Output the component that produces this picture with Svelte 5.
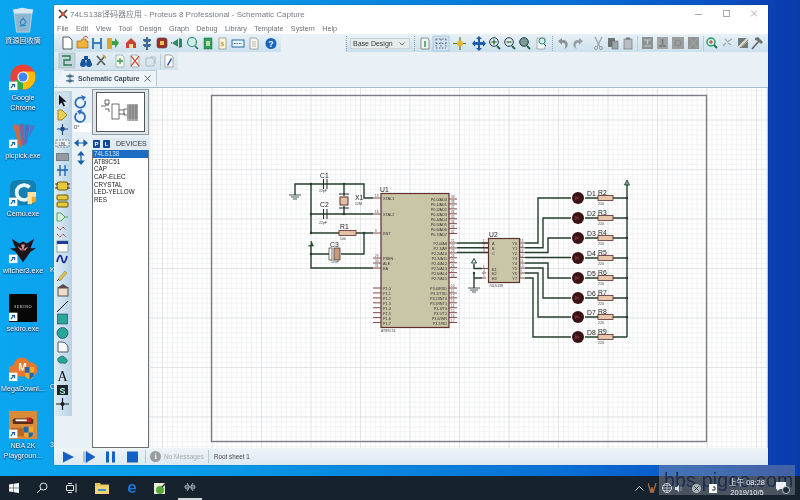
<script>
  const menu = ['File','Edit','View','Tool','Design','Graph','Debug','Library','Template','System','Help'];
  const devices = ['AT89C51','CAP','CAP-ELEC','CRYSTAL','LED-YELLOW','RES'];
  const desk = [
    { k:'bin', l:'資源回收筒' }, { k:'chrome', l:'Google Chrome' }, { k:'pick', l:'picpick.exe' },
    { k:'cemu', l:'Cemu.exe' }, { k:'witcher', l:'witcher3.exe' }, { k:'sekiro', l:'sekiro.exe' },
    { k:'mega', l:'MegaDownl...' }, { k:'nba', l:'NBA 2K Playgroun...' }
  ];
  const p0 = ['P0.0/AD0','P0.1/AD1','P0.2/AD2','P0.3/AD3','P0.4/AD4','P0.5/AD5','P0.6/AD6','P0.7/AD7'];
  const p2 = ['P2.0/A8','P2.1/A9','P2.2/A10','P2.3/A11','P2.4/A12','P2.5/A13','P2.6/A14','P2.7/A15'];
  const p3 = ['P3.0/RXD','P3.1/TXD','P3.2/INT0','P3.3/INT1','P3.4/T0','P3.5/T1','P3.6/WR','P3.7/RD'];
  const rowsY = (s) => Array.from({length:8},(_,i)=>s+i*4.93);
  const leds = [198,218,238,258,278,298,317,337];
  const y2l = [243,247.7,252.5,257.5,263,268,273,278];
  const y2r = [537,542,547,0,547,542,537,532];
  const leftP1 = rowsY(288);
</script>

<div class="screen">
  <div class="desktop">
    <div class="icons">
      {#each desk as d}
        <div class="dicon">
          <svg width="28" height="28" viewBox="0 0 30 30">
            {#if d.k==='bin'}
              <path d="M5 4h20l-3 24H8z" fill="#8fb6cf" stroke="#cfe4f0" stroke-width=".7"/>
              <path d="M4 4l10-2 12 2-1 4H6z" fill="#d8e8f2"/>
              <path d="M12 17l3-4 3 4-2 3h-3zM11 21h7" fill="none" stroke="#2f8fc8" stroke-width="1.4"/>
            {:else if d.k==='chrome'}
              <circle cx="15" cy="15" r="13.5" fill="#ea4335"/>
              <path d="M15 15L3.5 22A13.5 13.5 0 0 0 15 28.500z" fill="#34a853"/>
              <path d="M15 15L15 28.500A13.500 13.500 0 0 0 27 9H15z" fill="#fbbc05"/>
              <path d="M3 21l7-4 5 11a13 13 0 0 1-12-7z" fill="#34a853"/>
              <circle cx="15" cy="15" r="6" fill="#fff"/><circle cx="15" cy="15" r="4.800" fill="#4285f4"/>
            {:else if d.k==='pick'}
              <path d="M4 4l6 0 4 24-3 0z" fill="#c96a4a"/><path d="M11 3l5 0 1 23-3 0z" fill="#8f5f8f"/><path d="M17 4l5 0-3 20-2 0z" fill="#556ab8"/><path d="M23 4l5 1-7 14z" fill="#4a79c8"/>
            {:else if d.k==='cemu'}
              <rect x="1" y="1" width="28" height="27" rx="7" fill="#157fb0"/>
              <path d="M22 9a8 8 0 1 0 0 11" fill="none" stroke="#e8f7fb" stroke-width="4"/>
              <path d="M20 14h9v9a6 6 0 0 1-9 2z" fill="#f0a92b"/><path d="M20 14h4.500v13H20zM24 14h5v5h-5z" fill="#f8e4a8"/>
            {:else if d.k==='witcher'}
              <path d="M15 28L7 17 1 13l6 0L3 3l8 5 4-2 4 2 8-5-4 10 6 0-6 4z" fill="#1b1418"/>
              <path d="M9 11l5 3-1 2zM21 11l-5 3 1 2zM13 9h4l-2 8z" fill="#d98fa0"/>
            {:else if d.k==='sekiro'}
              <rect x="0" y="0" width="30" height="30" fill="#070707"/>
              <text x="15" y="15" class="sek" text-anchor="middle">SEKIRO</text>
            {:else if d.k==='mega'}
              <path d="M5 24a6 6 0 0 1 0-12 9 9 0 0 1 17-3 7 7 0 0 1 2 15z" fill="#e8782a"/>
              <text x="10" y="18" class="megat">M</text>
              <path d="M17 14h10v7a6 6 0 0 1-5 6 6 6 0 0 1-5-6z" fill="#f1a92c"/><path d="M17 14h5v6h-5zM22 20h5l-1 4-4 3z" fill="#1f66b0"/>
            {:else}
              <rect x="0" y="0" width="30" height="30" fill="#d98b3a"/>
              <rect x="4" y="8" width="22" height="6" rx="2" fill="#5a2c18"/><rect x="7" y="9" width="16" height="2" fill="#fff"/>
              <rect x="19" y="7" width="5" height="5" fill="#c4252a"/>
              <path d="M2 18h14v9H2z" fill="#b76524"/>
              <path d="M16 17h10v6a6 6 0 0 1-5 6 6 6 0 0 1-5-6z" fill="#f1a92c"/><path d="M16 17h5v6h-5zM21 23h5l-1 4-4 2z" fill="#1f66b0"/>
            {/if}
            {#if d.k!=='bin'}
              <rect x="0" y="20" width="9" height="9" fill="#fff"/><path d="M2 27l3-4M3 23h3v3" stroke="#1659a8" stroke-width="1.200" fill="none"/>
            {/if}
          </svg>
          <span class="dlabel">{d.l}</span>
        </div>
      {/each}
    </div>
    <span class="peek p1">K</span><span class="peek p2">C</span><span class="peek p3">3</span>

    <div class="window">
      <div class="titlebar">
        <svg width="10" height="10" viewBox="0 0 10 10"><path d="M1 1l8 8M9 1L1 9" stroke="#333" stroke-width="1.600"/><circle cx="5" cy="5" r="2.200" fill="#c85a3c"/></svg>
        <span class="title">74LS138译码器应用 - Proteus 8 Professional - Schematic Capture</span>
        <span class="spacer"></span>
        <svg class="caps" width="76" height="10" viewBox="0 0 76 10"><path d="M14 5.500h7" stroke="#aaa"/><rect x="42.500" y="1.500" width="6" height="6" fill="none" stroke="#aaa"/><path d="M70 1.500l6 6M76 1.500l-6 6" stroke="#aaa"/></svg>
      </div>
      <div class="menubar">{#each menu as m}<span>{m}</span>{/each}</div>

      <div class="tool1">
        <svg class="tb" width="714" height="18" viewBox="54 34 714 18">
          <path d="M63 37h6l3 3v9h-9z" fill="#fff" stroke="#333" stroke-width=".8"/>
          <path d="M77 41h4l1-2h4v2h2v7H77z" fill="#eeb13a" stroke="#8a5c10" stroke-width=".6"/><path d="M83 38l3-2 2 2" stroke="#d44" fill="none"/>
          <rect x="92" y="38" width="10" height="11" fill="#3a7db8"/><rect x="94" y="38" width="6" height="4" fill="#e8eef2"/><rect x="94" y="44" width="6" height="5" fill="#cfe0ec"/>
          <rect x="107" y="38" width="5" height="11" fill="#d8a738"/><path d="M112 41h3v-3l4 5-4 5v-3h-3z" fill="#3aa24a"/>
          <path d="M126 43l5-5 5 5v5h-10z" fill="#c9432f"/><rect x="129" y="44" width="4" height="4" fill="#f2d9a0"/>
          <path d="M143 40h8M143 45h8M147 37v13" stroke="#2c4d6a" stroke-width="1.600"/><rect x="144" y="39" width="6" height="3" fill="#3d6d94"/><rect x="144" y="44" width="6" height="3" fill="#3d6d94"/>
          <rect x="157" y="38" width="10" height="10" rx="2" fill="#9c2d2d" stroke="#444" stroke-width=".6"/><rect x="160" y="41" width="4" height="4" fill="#e9c25a"/>
          <path d="M172 43l6-4v8zM179 38l3 1v8l-3 1z" fill="#2f8a5e"/><path d="M172 43h-1" stroke="#222"/>
          <circle cx="192" cy="42" r="4.500" fill="#cdeee6" stroke="#2d8a7a" stroke-width="1.200"/><path d="M195 46l3 3" stroke="#2d6a5a" stroke-width="1.500"/>
          <rect x="204" y="38" width="8" height="11" fill="#2f9e60" stroke="#1f6a40" stroke-width=".5"/><rect x="206" y="41" width="4" height="5" fill="#b8e0a0"/>
          <path d="M219 38h7v11h-7z" fill="#fff6d8" stroke="#777" stroke-width=".6"/><text x="220.500" y="46" class="ti" fill="#a8801a">$</text>
          <rect x="232" y="40" width="12" height="7" fill="#eef5fa" stroke="#2b6ca5"/><path d="M234 43.500h8" stroke="#2b6ca5" stroke-dasharray="1.500 1"/>
          <path d="M250 38h6l2 2v9h-8z" fill="#f4f4f0" stroke="#888" stroke-width=".7"/><path d="M252 42h4M252 44h4M252 46h4" stroke="#999" stroke-width=".6"/>
          <circle cx="271" cy="43.500" r="5.500" fill="#1565c0"/><text x="271" y="46.500" class="q" text-anchor="middle">?</text>
          <path d="M346.500 36v15M414.500 36v15" stroke="#8ea6b4" stroke-dasharray="1 1"/>
          <path d="M421 38h7l1 2v9h-8z" fill="#f3f5f2" stroke="#666" stroke-width=".7"/><path d="M425 41v6" stroke="#2f8a4e" stroke-width="1.400"/>
          <rect x="433" y="36" width="16" height="15" fill="#cfe3f2" stroke="#94b6ce" stroke-width=".6"/><path d="M436 39h10M436 43.500h10M436 48h10M436 39v9M441 39v9M446 39v9" stroke="#445" stroke-width=".8" stroke-dasharray="1.500 1.500"/>
          <path d="M453 43.500h13M460 37v13" stroke="#5f7a18" stroke-width="1.200"/><circle cx="460" cy="43.500" r="3" fill="#e0b836"/>
          <path d="M479 36l3 3h-2v3h3v-2l3 3.500-3 3.500v-2h-3v3h2l-3 3-3-3h2v-3h-3v2l-3-3.500 3-3.500v2h3v-3h-2z" fill="#1b5fa8"/>
          <circle cx="494" cy="42" r="4.300" fill="#dceee8" stroke="#235" stroke-width="1"/><path d="M497 46l3 3" stroke="#264" stroke-width="1.800"/><path d="M491.500 42h5M494 39.500v5" stroke="#185a28" stroke-width="1.100"/>
          <circle cx="509" cy="42" r="4.300" fill="#dceee8" stroke="#235" stroke-width="1"/><path d="M512 46l3 3" stroke="#264" stroke-width="1.800"/><path d="M506.500 42h5" stroke="#185a28" stroke-width="1.100"/>
          <circle cx="524" cy="42" r="4.300" fill="#7c9c94" stroke="#235" stroke-width="1"/><path d="M527 46l3 3" stroke="#264" stroke-width="1.800"/>
          <path d="M537 38h8v11h-8z" fill="#f4f6f4" stroke="#888" stroke-width=".6"/><circle cx="542" cy="41" r="3" fill="#d8f0e8" stroke="#2d8a7a" stroke-width="1"/><path d="M544 44l2 2" stroke="#2d6a5a"/>
          <path d="M552.500 36v15" stroke="#8ea6b4" stroke-dasharray="1 1"/>
          <path d="M558 41l4-3v2h2a4.500 4.500 0 0 1 2 8l-2 1a4 4 0 0 0 0-6h-2v2z" fill="#8a9296"/>
          <path d="M583 41l-4-3v2h-2a4.500 4.500 0 0 0-2 8l2 1a4 4 0 0 1 0-6h2v2z" fill="#9aa2a6"/>
          <path d="M595 37l5 10M602 37l-5 10" stroke="#9aa0a4" stroke-width="1.200"/><circle cx="596" cy="48" r="1.500" fill="none" stroke="#9aa0a4"/><circle cx="601" cy="48" r="1.500" fill="none" stroke="#9aa0a4"/>
          <rect x="608" y="38" width="7" height="9" fill="#6c7478"/><rect x="612" y="41" width="6" height="8" fill="#9da5a9" stroke="#555" stroke-width=".5"/>
          <rect x="624" y="39" width="8" height="10" fill="#b9bfc2" stroke="#777" stroke-width=".7"/><rect x="626" y="37.500" width="4" height="2" fill="#777"/>
          <path d="M637.500 36v15" stroke="#a6bac6" stroke-width=".6"/>
          <rect x="642" y="37" width="11" height="12" fill="#8e9294"/><path d="M644 40h7M647.500 40v4M644 46h7" stroke="#c9cccd" stroke-width="1.200"/>
          <rect x="657" y="37" width="11" height="12" fill="#a0a4a6"/><path d="M662.500 39v6M659 46h7" stroke="#737779" stroke-width="1.500"/>
          <rect x="672" y="37" width="12" height="12" fill="#9a9e9f"/><circle cx="678" cy="43" r="3" fill="none" stroke="#86898a"/>
          <rect x="688" y="37" width="11" height="12" fill="#909495"/><path d="M689 38l9 10M698 38l-9 10" stroke="#a5a8a9"/>
          <path d="M703.500 36v15" stroke="#a6bac6" stroke-width=".6"/>
          <circle cx="711" cy="42" r="4" fill="#d5eee0" stroke="#239a6a" stroke-width="1.400"/><path d="M714 45l3 3" stroke="#1b6a4a" stroke-width="1.800"/><path d="M709 42h4M711 40v4" stroke="#b33"/>
          <path d="M723 46l3-3M727 42l5-3M725 39l2 2M731 45l-3-2" stroke="#9da3a6" stroke-width="1.100"/>
          <rect x="738" y="38" width="10" height="10" fill="#73787a"/><path d="M738 48l10-10" stroke="#dde0d6" stroke-width="2"/><path d="M741 47l7-6" stroke="#c6bf80"/>
          <path d="M752 49l7-8" stroke="#666" stroke-width="1.600"/><path d="M755 38l3-1 5 5-2 2-3-3-3-1z" fill="#6e7376"/>
        </svg>
        <div class="select">Base Design<svg width="6" height="4" viewBox="0 0 6 4"><path d="M.5.5L3 3 5.500.5" stroke="#666" fill="none"/></svg></div>
      </div>

      <div class="tool2">
        <svg width="124" height="18" viewBox="54 52 124 18">
          <rect x="59" y="53" width="16" height="15" fill="#c2d5dd" stroke="#9fb6c2" stroke-width=".6"/>
          <path d="M62 56h8v4h-6v5h8" fill="none" stroke="#2d7a52" stroke-width="1.300"/>
          <path d="M80 64a3 3 0 0 0 6 0l-1-5h-3zM86 64a3 3 0 0 0 6 0l-2-5h-3z" fill="#14559e"/><rect x="84" y="56" width="4" height="4" fill="#14559e"/>
          <path d="M97 65l8-9M97 56l8 9" stroke="#59605f" stroke-width="1.700"/><path d="M103 55l3 3" stroke="#c9a13a" stroke-width="1.500"/>
          <path d="M116 55h6l2 2v10h-8z" fill="#f2f6ea" stroke="#8aa" stroke-width=".7"/><path d="M120 58v6M117 61h6" stroke="#3c9a4a" stroke-width="1.300"/>
          <path d="M131 55h6l2 2v10h-8z" fill="#f5efe6" stroke="#999" stroke-width=".7"/><path d="M131 56l8 10M139 56l-8 10" stroke="#c0392b" stroke-width="1.200"/>
          <path d="M146 58h6l2 2v6h-8zM150 57h5v7" fill="none" stroke="#aeb6ba" stroke-width=".9"/>
          <path d="M160.500 54v15" stroke="#a6bac6" stroke-width=".6"/>
          <path d="M165 55h6l2 2v10h-8z" fill="#fbfbf8" stroke="#8a8a8a" stroke-width=".7"/><path d="M167 65l4-7 1 1-4 7z" fill="#1a4f9c"/>
        </svg>
      </div>

      <div class="tabs">
        <div class="tab">
          <svg width="8" height="11" viewBox="0 0 10 12"><path d="M0 3h10M0 9h10M5 0v12" stroke="#2c4d6a" stroke-width="1.100"/><rect x="2" y="2" width="6" height="2.500" fill="#3d6d94"/><rect x="2" y="7.500" width="6" height="2.500" fill="#3d6d94"/></svg>
          <b>Schematic Capture</b>
          <svg class="x" width="7" height="7" viewBox="0 0 7 7"><path d="M.5.5l6 6M6.500.5l-6 6" stroke="#444" stroke-width=".8"/></svg>
        </div>
      </div>

      <div class="main">
        <div class="toolbox">
          <svg width="17" height="325" viewBox="55 91 17 325">
            <rect x="55.500" y="92" width="14" height="16" fill="#cfdfea" stroke="#b6ccd8" stroke-width=".5"/>
            <path d="M59 95v10l2.500-2.500 2 4 1.500-.7-2-4h3.500z" fill="#111"/>
            <path d="M58 110h4l5 5-5 5h-4z" fill="#e9cf5a" stroke="#a08620"/>
            <path d="M57 129h11M62.500 124v11" stroke="#1a4f8c" stroke-width="1.200"/><circle cx="62.500" cy="129" r="2.300" fill="#1a4f8c"/>
            <rect x="56" y="140" width="13" height="7" fill="#eef4f8" stroke="#5b6d78" stroke-dasharray="2 1" stroke-width=".8"/><text x="62.500" y="145.500" class="lb" text-anchor="middle" fill="#334">LBL</text>
            <rect x="56" y="153" width="13" height="8" fill="#777e82"/><path d="M57 155h11M57 157h11M57 159h11" stroke="#dde" stroke-width=".6"/>
            <path d="M57 170h11M60 165v11M65 165v11" stroke="#1b5fa8" stroke-width="1.300"/>
            <rect x="57" y="182" width="11" height="8" rx="2" fill="#e6c83a" stroke="#6a5a10"/><path d="M55 184h3M55 188h3M67 184h3M67 188h3" stroke="#333"/>
            <rect x="57" y="195" width="11" height="5" rx="1" fill="#e6c83a" stroke="#6a5a10"/><rect x="57" y="202" width="11" height="5" rx="1" fill="#e6c83a" stroke="#6a5a10"/>
            <path d="M57 213h4l4 4-4 4h-4zM65 217h3" fill="#d8eedc" stroke="#58a06a"/>
            <path d="M57 227l3 3 3-3 3 3M57 234l3 3 3-3 3 3" fill="none" stroke="#a33" stroke-width="1" stroke-dasharray="1.500 .6"/>
            <rect x="57" y="241" width="11" height="11" fill="#fdfdfd" stroke="#8aa"/><rect x="57" y="241" width="11" height="3" fill="#1f3c9c"/>
            <path d="M57 262c2-8 4-8 5-3s3 5 5-3" fill="none" stroke="#1d2a9c" stroke-width="1.700"/>
            <path d="M58 279l7-8 2 2-7 8z" fill="#e0c04a" stroke="#777" stroke-width=".5"/><path d="M57 281l2-2" stroke="#444"/>
            <rect x="58" y="288" width="10" height="8" fill="#f0ddc8" stroke="#555"/><path d="M57 288l6-4 6 4" fill="#5d4b4b"/>
            <path d="M57 312l11-11" stroke="#111" stroke-width="1"/>
            <rect x="57.500" y="314" width="10" height="10" fill="#27a896" stroke="#223377" stroke-width=".6"/>
            <circle cx="62.500" cy="333" r="5.500" fill="#27a896" stroke="#135"  stroke-width=".6"/>
            <path d="M58 342h4a6 6 0 0 1 6 6v4H58z" fill="#f4f8fa" stroke="#556"/>
            <path d="M60 357a3 3 0 0 1 5 1 3 3 0 0 1 2 4 3 3 0 0 1-4 1 4 4 0 0 1-5-2 3 3 0 0 1 2-4z" fill="#27a896" stroke="#135" stroke-width=".5"/>
            <text x="62.500" y="381" class="bigA" text-anchor="middle">A</text>
            <rect x="57" y="385" width="11" height="10" fill="#223"/><text x="62.500" y="393.500" class="sS" text-anchor="middle">S</text>
            <path d="M56 404h13M62.500 398v12" stroke="#1c1c1c" stroke-width="1.200"/><circle cx="62.500" cy="404" r="2" fill="#1c1c1c"/>
          </svg>
        </div>
        <div class="orient">
          <svg width="18" height="80" viewBox="0 0 18 80">
            <path d="M13 8a5 5 0 1 1-3-3" fill="none" stroke="#2a6dba" stroke-width="1.800"/><path d="M9 2l5 2-3 4z" fill="#2a6dba"/>
            <path d="M5 20a5 5 0 1 0 3-1" fill="none" stroke="#2a6dba" stroke-width="1.800"/><path d="M10 16l-5 2 3 4z" fill="#2a6dba"/>
            <path d="M3 50h12M3 50l3-2.500v5zM15 50l-3-2.500v5z" fill="#1b5fa8" stroke="#1b5fa8" stroke-width="1.200"/>
            <path d="M9 59v12M9 59l-2.500 3h5zM9 71l-2.500-3h5z" fill="#1b5fa8" stroke="#1b5fa8" stroke-width="1.200"/>
          </svg>
          <div class="angle">0°</div>
        </div>
        <div class="devpanel">
          <div class="preview">
            <div class="pv-in">
              <svg width="47" height="41" viewBox="0 0 47 41">
                <rect x="15" y="12" width="7" height="15" fill="#fff" stroke="#333" stroke-width=".7"/>
                <path d="M8 8h4v4H8zM8 13h4M8 17h4v3M4 14h5M22 18h5M22 22h6M27 17h5v6h-5zM31 20h3" fill="none" stroke="#444" stroke-width=".8"/>
                <rect x="30" y="12" width="11" height="17" fill="#bbb"/>
                <path d="M30 14h11M30 16h11M30 18h11M30 20h11M30 22h11M30 24h11M30 26h11M33 12v17M36 12v17M39 12v17" stroke="#333" stroke-width=".4"/>
              </svg>
            </div>
          </div>
          <div class="devhead"><i class="pl">P</i><i class="pl">L</i><span>DEVICES</span></div>
          <div class="devlist">
            <div class="dv sel">74LS138</div>
            {#each devices as d}<div class="dv">{d}</div>{/each}
          </div>
        </div>

        <svg class="canvas" width="616" height="360" viewBox="150 88 616 360">
          <defs>
            <pattern id="mn" x="210.500" y="119.500" width="4.950" height="4.950" patternUnits="userSpaceOnUse"><path d="M0 0V4.950M0 0H4.950" fill="none" stroke="#e6e8ea" stroke-width="1"/></pattern>
            <pattern id="mj" x="210.500" y="119.500" width="49.500" height="49.500" patternUnits="userSpaceOnUse"><path d="M0 0V49.500M0 0H49.500" fill="none" stroke="#d3d6d9" stroke-width="1"/></pattern>
          </defs>
          <rect x="150" y="88" width="616" height="360" fill="#fff"/>
          <rect x="150" y="88" width="616" height="360" fill="url(#mn)"/>
          <rect x="150" y="88" width="616" height="360" fill="url(#mj)"/>
          <rect x="210.500" y="95.500" width="495" height="346" fill="none" stroke="#7d7d88" stroke-width="1.400"/>

          <g fill="none" stroke="#24402c" stroke-width="1.400">
            <path d="M294 195V184H363V198H372"/>
            <path d="M310 184V233H338M355 233H372M310 214H372"/>
            <path d="M343 184V196M343 206V214"/>
            <path d="M363 233V254H340M328 254H310"/>
            <path d="M310 245V268H372"/>
            <path d="M456 243H487M456 247.700H487M456 252.500H487"/>
            <path d="M473 264V268.500H481M473 273V288M473 278H481"/>
            {#each leds as y,i}
              <path d="M524 {y2l[i]}{y2r[i]?`H${y2r[i]}V${y}`:''}H570M584 {y}H597M612 {y}H626"/>
            {/each}
            <path d="M626 184V337"/>
          </g>
          <g fill="#1f3a28">
            {#each [[310,184],[343,184],[310,214],[343,214],[310,233],[363,233],[310,254],[626,198],[626,218],[626,238],[626,258],[626,278],[626,298],[626,317],[473,273]] as [x,y]}<circle cx={x} cy={y} r="1.200"/>{/each}
          </g>

          <path d="M288 195h12M290 197h8M292 199h4" stroke="#233" stroke-width=".8" fill="none"/>
          <path d="M467 288h12M469 290h8M471 292h4" stroke="#233" stroke-width=".8" fill="none"/>
          <path d="M626 184v-2M623.500 185h5L626 180z" fill="none" stroke="#1a4a2a"/>
          <path d="M310 245l-2.500 1h5L310 241z" fill="#1a4a2a" stroke="#1a4a2a" stroke-width=".7"/>
          <path d="M470.500 263h5L473 258.500z" fill="none" stroke="#1a4a2a"/>

          <g stroke="#2a2a2a" stroke-width="1" fill="none">
            <path d="M322.500 179v10M326 179v10"/>
            <path d="M322.500 209v10M326 209v10"/>
          </g>
          <rect x="328" y="248" width="3" height="12" fill="#fff" stroke="#333" stroke-width=".7"/><rect x="333" y="248" width="6" height="12" fill="#c99a7a" stroke="#333" stroke-width=".7"/>
          <path d="M338 194h10M338 208h10" stroke="#2a2a2a" stroke-width="1"/>
          <rect x="339" y="197" width="8" height="8" fill="#e0bfa8" stroke="#5a2d2d"/>
          <rect x="338" y="230.500" width="17" height="5" fill="#e3c1a6" stroke="#5a2d2d" stroke-width=".8"/>

          <rect x="380" y="193.500" width="68" height="134" fill="#c8c6a6" stroke="#5e3030" stroke-width="1.200"/>
          <g stroke="#6a2222" stroke-width=".8">
            {#each [198,214,233,258,263,268,...leftP1] as y}<path d="M372 {y}H380"/>{/each}
            {#each [...rowsY(199),...rowsY(243),...rowsY(288)] as y}<path d="M448 {y}H456"/>{/each}
          </g>
          <g class="pin">
            <text x="382" y="200">XTAL1</text><text x="382" y="216">XTAL2</text><text x="382" y="235">RST</text>
            <text x="382" y="260">PSEN</text><text x="382" y="265">ALE</text><text x="382" y="270">EA</text>
            {#each leftP1 as y,i}<text x="382" y={y+2}>P1.{i}</text>{/each}
          </g>
          <g class="pin" text-anchor="end">
            {#each p0 as t,i}<text x="446" y={201+i*4.93}>{t}</text>{/each}
            {#each p2 as t,i}<text x="446" y={245+i*4.93}>{t}</text>{/each}
            {#each p3 as t,i}<text x="446" y={290+i*4.93}>{t}</text>{/each}
          </g>
          <g class="num">
            {#each [19,18,9,29,30,31] as n,i}<text x="374" y={[197,213,232,257,262,267][i]}>{n}</text>{/each}
            {#each [39,38,37,36,35,34,33,32] as n,i}<text x="450" y={198+i*4.93}>{n}</text>{/each}
            {#each [21,22,23,24,25,26,27,28] as n,i}<text x="450" y={242+i*4.93}>{n}</text>{/each}
            {#each [10,11,12,13,14,15,16,17] as n,i}<text x="450" y={287+i*4.93}>{n}</text>{/each}
          </g>
          <text x="380" y="332" class="small">AT89C51</text>
          <text x="379" y="192" class="ref">U1</text>
          <text x="319" y="178" class="ref">C1</text><text x="319" y="207" class="ref">C2</text>
          <text x="318" y="192" class="small">22pF</text><text x="318" y="224" class="small">22pF</text>
          <text x="354" y="200" class="ref">X1</text><text x="354" y="205" class="small">12M</text>
          <text x="339" y="229" class="ref">R1</text><text x="339" y="240" class="small">10k</text>
          <text x="329" y="247" class="ref">C3</text><text x="330" y="263" class="small">10uF</text>

          <rect x="487.500" y="238.500" width="31" height="44" fill="#c8c6a6" stroke="#5e3030" stroke-width="1.200"/>
          <g stroke="#6a2222" stroke-width=".8">
            <path d="M481 243H487M481 247.700H487M481 252.500H487M481 268.500H487M481 273H485M481 278H485"/>
            {#each y2l as y}<path d="M518 {y}H524"/>{/each}
          </g>
          <g class="pin">
            <text x="491" y="245">A</text><text x="491" y="250">B</text><text x="491" y="254.500">C</text>
            <text x="491" y="270.500">E1</text><text x="491" y="275">E2</text><text x="491" y="280">E3</text>
          </g>
          <g class="pin" text-anchor="end">{#each y2l as y,i}<text x="516" y={y+2}>Y{i}</text>{/each}</g>
          <g class="num">
            <text x="482" y="242">1</text><text x="482" y="246.700">2</text><text x="482" y="251.500">3</text>
            <text x="482" y="267.500">6</text><text x="482" y="272">4</text><text x="482" y="277">5</text>
            {#each [15,14,13,12,11,10,9,7] as n,i}<text x="519" y={y2l[i]-1}>{n}</text>{/each}
          </g>
          <text x="488" y="287" class="small">74LS138</text>
          <text x="488" y="237" class="ref">U2</text>

          {#each leds as y,i}
            <circle cx="577" cy={y} r="6" fill="#3a1216"/>
            <path d="M574 {y-2}l4 2-4 2zM578 {y-2.500}v5" fill="#6a2b2b" stroke="#7a3a3a" stroke-width=".4"/>
            <text x="586" y={y-2} class="ref">D{i+1}</text>
            <rect x="597" y={y-2.500} width="15" height="5" fill="#e6c5ab" stroke="#5a2d2d" stroke-width=".8"/>
            <text x="597" y={y-3.500} class="ref">R{i+2}</text>
            <text x="597" y={y+7} class="small">220</text>
          {/each}
        </svg>
      </div>

      <div class="status">
        <svg width="84" height="14" viewBox="0 0 84 14">
          <path d="M9 1.500l11 5.500-11 5.500z" fill="#1460c4"/>
          <path d="M30 1.500v11M32 1.500l9 5.500-9 5.500z" fill="#1460c4" stroke="#1460c4" stroke-width=".6"/>
          <rect x="52" y="1.500" width="3" height="11" fill="#1460c4"/><rect x="58" y="1.500" width="3" height="11" fill="#1460c4"/>
          <rect x="73" y="1.500" width="11" height="11" fill="#1460c4"/>
        </svg>
        <span class="sep"></span>
        <span class="info">i</span>
        <span class="nomsg">No Messages</span>
        <span class="sep s2"></span>
        <span class="root">Root sheet 1</span>
      </div>
    </div>
  </div>

  <div class="taskbar">
    <svg class="win" width="10" height="10" viewBox="0 0 10 10"><path d="M0 1.400L4.300.8v3.900H0zM4.800.7L10 0v4.700H4.800zM0 5.200h4.300v3.900L0 8.500zM4.800 5.200H10V10l-5.200-.7z" fill="#f4f6f8"/></svg>
    <svg class="search" width="12" height="12" viewBox="0 0 12 12"><circle cx="7.500" cy="4.500" r="3.500" fill="none" stroke="#dfe4e8"/><path d="M5 7L1 11" stroke="#dfe4e8"/></svg>
    <svg class="tv" width="12" height="10" viewBox="0 0 12 10"><path d="M.5 2.500h7v5h-7zM2 .5h4M2 9.500h4M10 .5v9" fill="none" stroke="#dfe4e8"/></svg>
    <svg class="folder" width="14" height="12" viewBox="0 0 14 12"><path d="M0 1h5l1 1.500h8V12H0z" fill="#e8c25a"/><rect x="0" y="4" width="14" height="8" fill="#f2d473"/><rect x="3" y="7" width="8" height="2" fill="#3a90c8"/></svg>
    <span class="edge">e</span>
    <svg class="note" width="13" height="13" viewBox="0 0 13 13"><rect x="0" y="1" width="11" height="11" fill="#e9ecd6"/><circle cx="6" cy="8" r="4" fill="#5aa73a"/><path d="M8 5l4-4" stroke="#222" stroke-width="1.200"/></svg>
    <div class="active">
      <svg width="14" height="10" viewBox="0 0 14 10"><path d="M2 5h10M4 1l2 3M10 1L8 4M4 9l2-3M10 9L8 6" stroke="#9db0c0" fill="none"/><circle cx="4" cy="5" r="2" fill="none" stroke="#9db0c0"/><circle cx="10" cy="5" r="2" fill="none" stroke="#9db0c0"/></svg>
    </div>
    <span class="spacer"></span>
    <div class="tray">
      <svg width="9" height="5" viewBox="0 0 9 5"><path d="M.5 4.500l4-4 4 4" fill="none" stroke="#dfe4e8"/></svg>
      <svg width="9" height="10" viewBox="0 0 9 10"><path d="M0 0l3 10 1-6 1 6 3-10" fill="none" stroke="#b06a3c" stroke-width="1.300"/></svg>
      <svg width="10" height="10" viewBox="0 0 10 10"><circle cx="5" cy="5" r="4.500" fill="none" stroke="#d8dde2"/><path d="M0 5h10M5 0v10M1.500 2.500h7M1.500 7.500h7" stroke="#d8dde2" stroke-width=".6"/></svg>
      <svg width="8" height="9" viewBox="0 0 8 9"><path d="M0 3h2l2-2.500v8L2 6H0z" fill="#d8dde2"/><path d="M6 2v5" stroke="#8899a4"/></svg>
      <svg width="9" height="9" viewBox="0 0 9 9"><circle cx="4.500" cy="4.500" r="4.500" fill="#aab2b8"/><path d="M2.500 2.500l4 4M6.500 2.500l-4 4" stroke="#2b3640"/></svg>
      <svg width="8" height="9" viewBox="0 0 8 9"><rect width="8" height="9" fill="#f4f6f8"/><path d="M4 3h2v3H3" stroke="#333" fill="none"/></svg>
      <div class="clock"><span>上午 08:28</span><span>2019/10/5</span></div>
      <svg width="14" height="12" viewBox="0 0 14 12"><path d="M0 0h10v7H4L1 9V7H0z" fill="#eef1f4"/><circle cx="10" cy="8" r="3.500" fill="#1c2a36" stroke="#eef1f4" stroke-width=".7"/></svg>
    </div>
  </div>

  <div class="wm">bbs.pigoo.com</div>
</div>

<style>
  :global(body) { margin: 0; }
  .screen { position: relative; width: 800px; height: 500px; overflow: hidden; display: flex; flex-direction: column; font-family: "Liberation Sans", "Noto Sans CJK SC", sans-serif; filter: blur(.3px); }
  .desktop { position: relative; flex: 1; background: linear-gradient(90deg, #0ba6f0 0%, #0a97e6 30%, #0970d6 70%, #0a54c6 88%, #0a3fb2 97%, #0a3ca8 100%); }
  .icons { display: grid; grid-template-rows: 57px 58px 58px 57px 58px 60px 57px 60px; grid-template-columns: 46px; width: 46px; padding-top: 5px; }
  .dicon { display: flex; flex-direction: column; align-items: center; min-width: 0; }
  .dicon svg { flex: none; margin: 1px 0 2px; }
  .dlabel { font-size: 7.2px; line-height: 10px; width: 44px; flex: none; text-align: center; color: #fff; text-shadow: 0 0 2px #0a3a68, 0 1px 1px #0a3a68; }
  .peek { position: absolute; left: 50px; font-size: 7.2px; line-height: 10px; color: #fff; text-shadow: 0 0 2px #0a3a68; }
  .p1 { top: 265px; }
  .p2 { top: 382px; }
  .p3 { top: 440px; }
  .sek { font: 4.500px "Liberation Serif", serif; fill: #ddd; letter-spacing: .5px; }
  .megat { font: bold 11px "Liberation Sans", sans-serif; fill: #fff; }

  .window { position: absolute; left: 54px; top: 5px; width: 714px; height: 460px; background: #e9f1f7; display: flex; flex-direction: column; box-shadow: 0 0 1px rgba(0,30,80,.6); }
  .titlebar { flex: none; height: 17px; background: #fff; display: flex; align-items: center; padding: 0 8px 0 4px; gap: 2px; }
  .title { font-size: 8px; color: #777c80; white-space: nowrap; }
  .spacer { flex: 1; }
  .caps { margin-right: 3px; }
  .menubar { flex: none; height: 12px; background: #fff; display: flex; align-items: center; gap: 7.400px; padding-left: 3px; font-size: 7.200px; color: #6c7176; }
  .tool1 { position: relative; flex: none; height: 18px; background: linear-gradient(#e8f1f6, #cbe0ec) 0 0/227px 100% no-repeat, linear-gradient(#e8f1f6, #cbe0ec) 291px 0/423px 100% no-repeat; }
  .tb { display: block; }
  .select { position: absolute; left: 296px; top: 4px; width: 60px; height: 11px; box-sizing: border-box; background: #e6ebee; border: 1px solid #c8d2d8; font-size: 7px; color: #333; display: flex; align-items: center; justify-content: space-between; padding: 0 4px 0 2px; white-space: nowrap; }
  .tool2 { flex: none; height: 18px; }
  .tool2 svg { display: block; background: linear-gradient(#e2edf3, #d2e2ec); }
  .tabs { flex: none; height: 16.500px; border-bottom: 1.500px solid #a5bfce; padding-top: 0; }
  .tab { width: 101px; height: 16.500px; margin-left: 2px; padding-left: 9px; box-sizing: border-box; display: flex; align-items: center; gap: 4px; background: #eef5fa; border: 1px solid #b8ccd8; border-bottom: none; clip-path: polygon(8px 0, 100% 0, 100% 100%, 0 100%); font-size: 6.800px; color: #3d4a55; white-space: nowrap; }
  .tab .x { margin-left: auto; margin-right: 5px; flex: none; }
  .tab svg { flex: none; }
  .main { flex: 1; display: flex; min-height: 0; border-right: 2px solid #b3cedc; }
  .toolbox { flex: none; width: 17px; margin: 3px 0 0 1px; height: 325px; background: linear-gradient(90deg, #dcebf4, #b7d2e6); overflow: hidden; }
  .toolbox svg { display: block; }
  .orient { flex: none; width: 20px; display: flex; flex-direction: column; position: relative; padding-top: 5px; }
  .angle { position: absolute; top: 35px; left: 2px; width: 17px; height: 9px; background: #fff; font-size: 6px; line-height: 9px; color: #444; }
  .devpanel { flex: none; width: 57px; display: flex; flex-direction: column; padding-top: 1px; }
  .preview { height: 46px; width: 57px; background: #dfe7ec; border: 1px solid #8e9aa2; box-sizing: border-box; padding: 2px 3px 2px 3px; }
  .pv-in { background: #fff; border: 1px solid #555; height: 40px; overflow: hidden; box-sizing: border-box; }
  .pv-in svg { display: block; margin-top: -1px; }
  .devhead { flex: none; height: 12px; margin-top: 3px; display: flex; align-items: center; gap: 3px; padding-left: 1px; background: #dfeaf2; font-size: 7px; color: #333; }
  .devhead span { margin-left: 3px; }
  .pl { width: 7px; height: 8px; background: #10469a; color: #fff; font: bold 6px/8px "Liberation Sans", sans-serif; text-align: center; border-radius: 1px; }
  .devlist { flex: 1; background: #fff; border: 1px solid #6c7074; border-top: none; font-size: 6.300px; color: #222; }
  .dv { height: 7.700px; line-height: 8px; padding-left: 1px; white-space: nowrap; }
  .sel { background: #1a6dc0; color: #cfe4f6; height: 8px; }
  .canvas { flex: none; display: block; margin-left: 2px; }
  .pin text { font-size: 3.800px; fill: #333; }
  .num text { font-size: 3px; fill: #444; }
  .small { font-size: 3.500px; fill: #444; }
  .ref { font-size: 6.800px; fill: #1c1c1c; }
  .ti { font: 6px "Liberation Sans", sans-serif; }
  .lb { font: 4.500px "Liberation Sans", sans-serif; }
  .q { font: bold 9px "Liberation Sans", sans-serif; fill: #fff; }
  .bigA { font: 14px "Liberation Serif", serif; fill: #111; }
  .sS { font: bold 9px "Liberation Sans", sans-serif; fill: #99ffcc; }
  .status { flex: none; height: 17px; display: flex; align-items: center; background: linear-gradient(#eef4f8, #dce8f0); font-size: 6.500px; white-space: nowrap; }
  .sep { width: 1px; height: 13px; margin-left: 7px; background: #b8c8d2; }
  .info { width: 11px; height: 11px; margin-left: 4px; border-radius: 50%; background: #9a9c9e; color: #fff; text-align: center; font: bold 8px/11px "Liberation Serif", serif; }
  .nomsg { margin-left: 3px; color: #a8acb0; width: 44px; }
  .s2 { margin-left: 0; }
  .root { margin-left: 5px; color: #444; font-size: 6.300px; }

  .taskbar { position: relative; flex: none; height: 24px; background: #16222e; display: flex; align-items: center; }
  .win { margin-left: 9px; }
  .search { margin-left: 17px; }
  .tv { margin-left: 18px; }
  .folder { margin-left: 17px; }
  .edge { margin-left: 16px; width: 14px; text-align: center; color: #1a78d4; font: bold 17px/20px "Liberation Sans", sans-serif; }
  .note { margin-left: 15px; }
  .active { margin-left: 11px; width: 24px; height: 24px; box-sizing: border-box; display: flex; align-items: center; justify-content: center; border-bottom: 2px solid #d4d8dc; }
  .tray { position: relative; z-index: 2; display: flex; align-items: center; padding-right: 10px; }
  .tray svg:nth-child(2) { margin-left: 4px; }
  .tray svg:nth-child(3) { margin-left: 5px; }
  .tray svg:nth-child(4) { margin-left: 3px; }
  .tray svg:nth-child(5) { margin-left: 9px; }
  .tray svg:nth-child(6) { margin-left: 8px; }
  .clock { width: 36px; margin: 0 11px 0 12px; display: flex; flex-direction: column; align-items: center; font-size: 7.500px; line-height: 10px; color: #e8ecf0; white-space: nowrap; }
  .wm { position: absolute; left: 659px; top: 465px; width: 136px; height: 30px; box-sizing: border-box; padding-left: 5px; background: rgba(137,145,158,.45); color: rgba(18,36,78,.85); font: 19.500px/30px "Liberation Sans", sans-serif; letter-spacing: .2px; white-space: nowrap; }
</style>
